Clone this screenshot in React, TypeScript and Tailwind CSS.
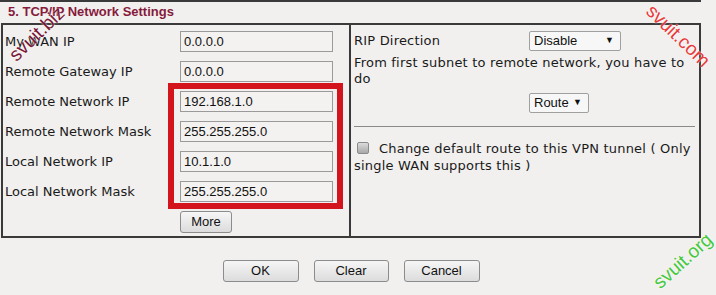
import React from "react";

const labelFont = { fontFamily: '"DejaVu Sans", Verdana, sans-serif' };

function Field({ label, value }: { label: string; value: string }) {
  return (
    <div className="flex items-center h-[21px] mb-[9px]">
      <div className="w-[177px] shrink-0 pl-[2px] text-[13px] text-[#1a1a1a] whitespace-nowrap" style={labelFont}>
        {label}
      </div>
      <div className="w-[153px] shrink-0 h-[21px] border border-[#9a9a9a] bg-[#f3f2f0] pl-[3px] text-[13px] leading-[19px] text-[#111] font-['Liberation_Sans',Arial,sans-serif]">
        {value}
      </div>
    </div>
  );
}

function Btn({ children, w }: { children: React.ReactNode; w: string }) {
  return (
    <div
      className={`${w} h-[22px] border border-[#8c8c8c] rounded-[3px] bg-gradient-to-b from-[#f6f6f6] to-[#dcdcdc] flex items-center justify-center text-[13px] text-[#111] font-['Liberation_Sans',Arial,sans-serif]`}
    >
      {children}
    </div>
  );
}

function Select({ text, w }: { text: string; w: string }) {
  return (
    <div
      className={`${w} h-[20px] border border-[#a0a0a0] rounded-[2px] bg-[#f7f7f7] flex items-center justify-between pl-[4px] pr-[6px] text-[13px] tracking-normal text-[#111] font-['Liberation_Sans',Arial,sans-serif]`}
    >
      <span>{text}</span>
      <span className="text-[9px]">▼</span>
    </div>
  );
}

export default function App() {
  return (
    <div className="relative w-[716px] h-[295px] overflow-hidden bg-[#f1f0ee]">
      <div className="w-[701px] h-[2px] bg-[#3a3a3a]" />
      <div className="h-[21px] pl-[8px] text-[13px] leading-[20px] font-bold text-[#861a3c] font-['Liberation_Sans',Arial,sans-serif]">
        5. TCP/IP Network Settings
      </div>
      <div className="ml-[1px] w-[700px] h-[215px] border-2 border-[#3a3a3a] flex">
        <div className="w-[348px] shrink-0 border-r-2 border-[#3a3a3a] pt-[6px]">
          <Field label="My WAN IP" value="0.0.0.0" />
          <Field label="Remote Gateway IP" value="0.0.0.0" />
          <Field label="Remote Network IP" value="192.168.1.0" />
          <Field label="Remote Network Mask" value="255.255.255.0" />
          <Field label="Local Network IP" value="10.1.1.0" />
          <Field label="Local Network Mask" value="255.255.255.0" />
          <div className="pl-[177px]">
            <Btn w="w-[52px]">More</Btn>
          </div>
        </div>
        <div className="flex-1 min-w-0 pl-[3px] pr-[4px] pt-[6px] text-[13px] text-[#1a1a1a] tracking-[0.2px]" style={labelFont}>
          <div className="flex items-center h-[19px]">
            <div className="w-[175px] shrink-0">RIP Direction</div>
            <Select text="Disable" w="w-[92px]" />
          </div>
          <div className="mt-[5px] leading-[16px] whitespace-nowrap">
            From first subnet to remote network, you have to
            <br />
            do
          </div>
          <div className="mt-[6px] pl-[175px]">
            <Select text="Route" w="w-[60px]" />
          </div>
          <div className="mt-[13px] h-[1px] bg-[#8a8a8a] w-[341px]" />
          <div className="mt-[13px] leading-[17px] whitespace-nowrap">
            <span className="inline-block align-[-1px] w-[12px] h-[12px] ml-[3px] mr-[10px] rounded-[2px] border border-[#8a8a8a] bg-gradient-to-b from-[#dcdcdc] to-[#a8a8a8]" />
            <span>Change default route to this VPN tunnel ( Only</span>
            <br />
            single WAN supports this )
          </div>
        </div>
      </div>
      <div className="w-[700px] flex justify-center gap-[15px] mt-[22px] ml-[1px]">
        <Btn w="w-[76px]">OK</Btn>
        <Btn w="w-[75px]">Clear</Btn>
        <Btn w="w-[76px]">Cancel</Btn>
      </div>

      {/* red highlight */}
      <div className="absolute left-[168px] top-[83px] w-[175px] h-[126px] border-[6px] border-[#d3141c]" />

      {/* watermarks */}
      <span className="absolute left-[-3px] top-[24px] w-[80px] text-center text-[19px] leading-[20px] text-[#7a1838] font-['Liberation_Sans',Arial,sans-serif] -rotate-[44deg] [text-shadow:0_0_2px_#fff]">
        svuit.biz
      </span>
      <span className="absolute left-[636px] top-[26px] w-[84px] text-center text-[19px] leading-[20px] text-[#e8393b] font-['Liberation_Sans',Arial,sans-serif] rotate-[44deg] [text-shadow:0_0_2px_#fff]">
        svuit.com
      </span>
      <span className="absolute left-[641px] top-[251px] w-[84px] text-center text-[19px] leading-[20px] text-[#46c83e] font-['Liberation_Sans',Arial,sans-serif] -rotate-[42deg] [text-shadow:0_0_2px_#fff]">
        svuit.org
      </span>
    </div>
  );
}
